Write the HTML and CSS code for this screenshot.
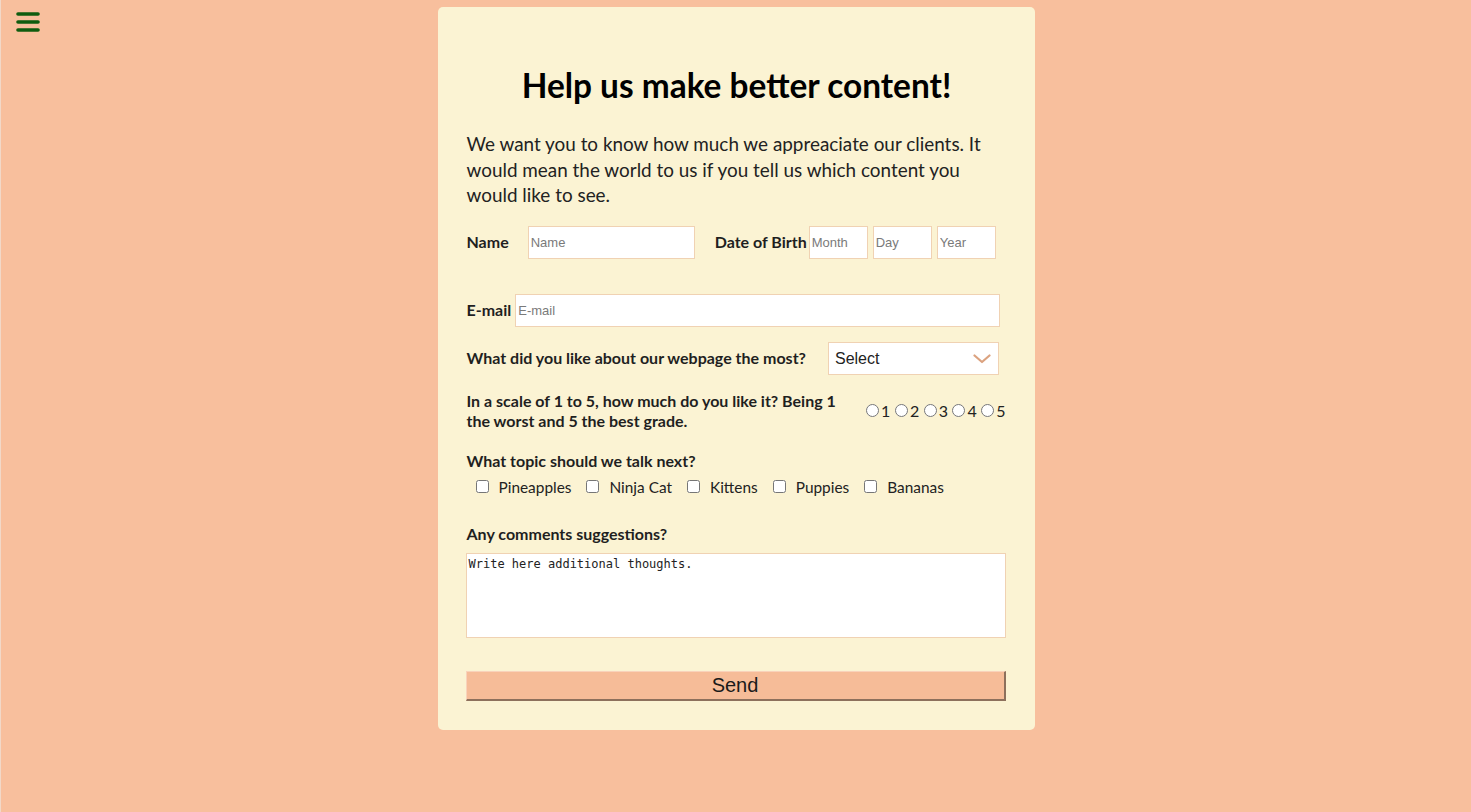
FILE: index.html
```html
<!DOCTYPE html>
<html lang="en">
<head>
<meta charset="utf-8">
<title>Survey</title>
<link rel="stylesheet" href="styles.css">
</head>
<body>
<button class="menu" type="button" aria-label="Menu">
  <svg width="26" height="24" viewBox="0 0 26 24"><g stroke="#0f5c0f" stroke-width="3.6" stroke-linecap="round"><line x1="3" y1="4" x2="23" y2="4"/><line x1="3" y1="12" x2="23" y2="12"/><line x1="3" y1="20" x2="23" y2="20"/></g></svg>
</button>
<main class="card">
  <h1 class="title">Help us make better content!</h1>
  <p class="intro">We want you to know how much we appreaciate our clients. It would mean the world to us if you tell us which content you would like to see.</p>
  <form class="form">
    <div class="row row-name">
      <label class="lbl lbl-name" for="name">Name</label>
      <input class="field field-name" id="name" type="text" placeholder="Name">
      <label class="lbl lbl-dob" for="month">Date of Birth</label>
      <input class="field field-date" id="month" type="text" placeholder="Month">
      <input class="field field-date" type="text" placeholder="Day">
      <input class="field field-date" type="text" placeholder="Year">
    </div>
    <div class="row row-email">
      <label class="lbl" for="email">E-mail</label>
      <input class="field field-email" id="email" type="text" placeholder="E-mail">
    </div>
    <div class="row row-select">
      <label class="lbl" for="like">What did you like about our webpage the most?</label>
      <div class="select-wrap">
        <select class="select" id="like"><option>Select</option></select>
        <svg class="chev" width="18" height="10" viewBox="0 0 18 10"><polyline points="1.5,1.5 9,8 16.5,1.5" fill="none" stroke="#dba27f" stroke-width="2.2" stroke-linecap="round" stroke-linejoin="round"/></svg>
      </div>
    </div>
    <div class="row row-scale">
      <span class="lbl lbl-scale">In a scale of 1 to 5, how much do you like it? Being 1 the worst and 5 the best grade.</span>
      <div class="radios">
        <label class="radio"><input type="radio" name="r">1</label>
        <label class="radio"><input type="radio" name="r">2</label>
        <label class="radio"><input type="radio" name="r">3</label>
        <label class="radio"><input type="radio" name="r">4</label>
        <label class="radio"><input type="radio" name="r">5</label>
      </div>
    </div>
    <div class="block block-topic">
      <span class="lbl">What topic should we talk next?</span>
      <div class="checks">
        <label class="check"><input type="checkbox">Pineapples</label>
        <label class="check"><input type="checkbox">Ninja Cat</label>
        <label class="check"><input type="checkbox">Kittens</label>
        <label class="check"><input type="checkbox">Puppies</label>
        <label class="check"><input type="checkbox">Bananas</label>
      </div>
    </div>
    <div class="block block-comments">
      <label class="lbl" for="comments">Any comments suggestions?</label>
      <textarea class="area" id="comments">Write here additional thoughts.</textarea>
    </div>
    <button class="send" type="button">Send</button>
  </form>
</main>
</body>
</html>
```
FILE: styles.css
```css
* { box-sizing: border-box; }
html, body { margin: 0; padding: 0; }
body {
  background: #f8bf9d;
  font-family: Lato, "Open Sans", sans-serif;
  color: #1f1f1f;
  min-height: 812px;
  padding-top: 7px;
  border-left: 1px solid #f2d8c8;
}
.menu {
  position: absolute;
  left: 15px;
  top: 10px;
  width: 26px;
  height: 24px;
  padding: 0;
  border: 0;
  background: transparent;
  line-height: 0;
}
.card {
  width: 597px;
  margin: 0 auto;
  background: #fbf3d3;
  border-radius: 5px;
  padding: 58px 28px 29px 29px;
}
.title {
  margin: 0;
  font-size: 33.4px;
  line-height: 40px;
  font-weight: 700;
  text-align: center;
  color: #000;
}
.intro {
  margin: 26px 0 0;
  font-size: 18.9px;
  line-height: 25.5px;
  color: #222;
}
.form { margin-top: 18px; }
.row { display: flex; align-items: center; }
.lbl { font-size: 16px; font-weight: 700; color: #1f1f1f; line-height: 20px; }
.field {
  height: 33px;
  border: 1px solid #f0d2b3;
  background: #fff;
  font-family: "Liberation Sans", Arial, sans-serif;
  font-size: 13px;
  padding: 0 2px;
  color: #333;
}
.field::placeholder { color: #7a7a7a; }
.lbl-name { margin-right: 19px; }
.field-name { width: 167px; }
.lbl-dob { margin-left: 20px; margin-right: 2px; }
.field-date { width: 59px; margin-right: 5px; }
.field-date:last-child { margin-right: 0; }
.row-email { margin-top: 35px; }
.field-email { width: 485px; height: 33px; margin-left: 4px; }
.row-select { margin-top: 15px; }
.select-wrap { position: relative; margin-left: 22px; }
.select {
  appearance: none;
  -webkit-appearance: none;
  width: 171px;
  height: 33px;
  border: 1px solid #f0d2b3;
  background: #fff;
  font-family: "Liberation Sans", Arial, sans-serif;
  font-size: 16px;
  color: #222;
  padding: 0 6px;
  border-radius: 0;
}
.chev { position: absolute; right: 8px; top: 12px; pointer-events: none; }
.row-scale { margin-top: 16px; justify-content: space-between; }
.lbl-scale { width: 380px; }
.radios { display: flex; align-items: center; margin-right: 1px; }
.radio {
  display: flex;
  align-items: center;
  font-size: 16px;
  color: #222;
}
.radio input { width: 13px; height: 13px; margin: 0 2px 0 4.5px; }
.block-topic { margin-top: 20px; display: flex; flex-direction: column; }
.checks { display: flex; align-items: center; margin-top: 7px; padding-left: 9px; gap: 15px; }
.check {
  display: flex;
  align-items: center;
  font-size: 15.4px;
  color: #222;
}
.check input { width: 13px; height: 13px; margin: 0 10px 0 0; }
.block-comments { margin-top: 28px; display: flex; flex-direction: column; }
.area {
  margin-top: 9px;
  margin-left: -1px;
  width: 540px;
  height: 85px;
  border: 1px solid #f0d2b3;
  background: #fff;
  font-family: "DejaVu Sans Mono", monospace;
  font-size: 12px;
  line-height: 15px;
  color: #222;
  padding: 3px 2px 2px;
  resize: none;
}
.send {
  display: block;
  margin-top: 33px;
  margin-left: -1px;
  width: 540px;
  height: 30px;
  background: #f6bc98;
  border-style: solid;
  border-width: 1px 2px 2px 1px;
  border-color: #f9d3bb #8d705c #8d705c #f9d3bb;
  font-family: "Liberation Sans", Arial, sans-serif;
  font-size: 20px;
  color: #1a1a1a;
  padding: 0;
}
```
